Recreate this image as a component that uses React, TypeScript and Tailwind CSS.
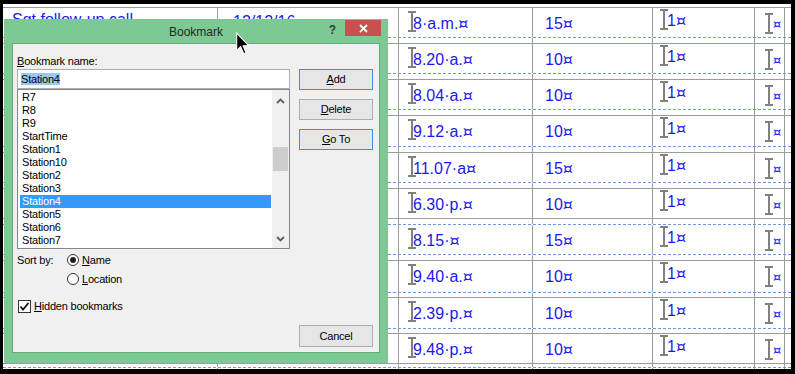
import React from "react";

const BLUE_TXT = "text-[#1a1aee]";

function Cur({ small }: { small?: boolean }) {
  return (
    <span className={small ? "font-['DejaVu_Sans',sans-serif] text-[13px]" : "font-['DejaVu_Sans',sans-serif] text-[16px]"}>¤</span>
  );
}

function IBeam() {
  return (
    <svg width="8" height="21" viewBox="0 0 8 21" className="shrink-0">
      <rect x="0" y="0" width="8" height="2" fill="#808080" />
      <rect x="3" y="0" width="2" height="21" fill="#808080" />
      <rect x="0" y="19" width="8" height="2" fill="#808080" />
    </svg>
  );
}

function withCur(s: string) {
  const base = s.endsWith("¤") ? s.slice(0, -1) : s;
  return (
    <>
      {base}
      <Cur />
    </>
  );
}

function TimeCell({ t }: { t: string }) {
  return (
    <div className="flex items-start pl-[9px] pt-[3px]">
      <IBeam />
      <span className={`ml-[-3px] mt-[4px] text-[16px] leading-[18px] whitespace-nowrap ${BLUE_TXT}`}>{withCur(t)}</span>
    </div>
  );
}

function DurCell({ d }: { d: string }) {
  return <div className={`pl-[12px] pt-[7px] text-[16px] leading-[18px] whitespace-nowrap ${BLUE_TXT}`}>{withCur(d)}</div>;
}

function OneCell() {
  return (
    <div className="flex items-start pl-[7px] pt-[1px]">
      <IBeam />
      <span className={`ml-[-1px] mt-[3px] text-[16px] leading-[18px] whitespace-nowrap ${BLUE_TXT}`}>{withCur("1¤")}</span>
    </div>
  );
}

function MarkCell() {
  return (
    <div className="flex items-start pl-[10px] pt-[5px]">
      <IBeam />
      <span className={`mt-[3px] leading-[14px] ${BLUE_TXT}`}>
        <Cur small />
      </span>
    </div>
  );
}

function Band({ h, cells }: { h: string; cells?: React.ReactNode[] }) {
  return (
    <div className={`grid grid-cols-[214px_181px_134px_120px_102px_30px_1fr] ${h}`}>
      {[0, 1, 2, 3, 4, 5, 6].map((i) => (
        <div key={i} className={i === 0 ? "min-w-0" : "min-w-0 border-l border-[#9c9c9c]"}>
          {cells ? cells[i] : null}
        </div>
      ))}
    </div>
  );
}

function Dash() {
  return <div className="h-px bg-[image:repeating-linear-gradient(90deg,#6a9be2_0_3px,transparent_3px_5px)]" />;
}

type Seg = { k: "a" | "b"; h: string } | { k: "d" };

type RowDef = { t?: string; d?: string; segs: Seg[]; first?: boolean };

const rows: RowDef[] = [
  { t: "8·a.m.¤", d: "15¤", first: true, segs: [{ k: "a", h: "h-[29px]" }, { k: "d" }, { k: "b", h: "h-[5px]" }] },
  { t: "8.20·a.¤", d: "10¤", segs: [{ k: "a", h: "h-[29px]" }, { k: "d" }, { k: "b", h: "h-[5px]" }] },
  { t: "8.04·a.¤", d: "10¤", segs: [{ k: "a", h: "h-[29px]" }, { k: "d" }, { k: "b", h: "h-[5px]" }] },
  { t: "9.12·a.¤", d: "10¤", segs: [{ k: "a", h: "h-[30px]" }, { k: "d" }, { k: "b", h: "h-[5px]" }] },
  { t: "11.07·a¤", d: "15¤", segs: [{ k: "a", h: "h-[29px]" }, { k: "d" }, { k: "b", h: "h-[5px]" }] },
  { t: "6.30·p.¤", d: "10¤", segs: [{ k: "a", h: "h-[29px]" }] },
  { t: "8.15·¤", d: "15¤", segs: [{ k: "b", h: "h-[5px]" }, { k: "d" }, { k: "a", h: "h-[29px]" }, { k: "d" }, { k: "b", h: "h-[5px]" }] },
  { t: "9.40·a.¤", d: "10¤", segs: [{ k: "a", h: "h-[31px]" }, { k: "d" }, { k: "b", h: "h-[4px]" }] },
  { t: "2.39·p.¤", d: "10¤", segs: [{ k: "a", h: "h-[30px]" }, { k: "d" }, { k: "b", h: "h-[4px]" }] },
  { t: "9.48·p.¤", d: "10¤", segs: [{ k: "a", h: "h-[29px]" }] },
  { segs: [{ k: "b", h: "h-[3px]" }, { k: "d" }, { k: "b", h: "h-[10px]" }] },
];

function Row({ r }: { r: RowDef }) {
  const cells: React.ReactNode[] = [
    r.first ? (
      <div className={`pt-[3px] pl-[9px] text-[16px] leading-[18px] whitespace-nowrap ${BLUE_TXT}`}>Sgt follow-up call</div>
    ) : null,
    r.first ? (
      <div className={`pt-[5px] pl-[15px] text-[16px] leading-[18px] whitespace-nowrap ${BLUE_TXT}`}>12/12/16</div>
    ) : null,
    r.t ? <TimeCell t={r.t} /> : null,
    r.d ? <DurCell d={r.d} /> : null,
    r.t ? <OneCell /> : null,
    r.t ? <MarkCell /> : null,
    null,
  ];
  return (
    <div className="flex flex-col border-t border-[#9c9c9c]">
      {r.segs.map((s, i) =>
        s.k === "d" ? <Dash key={i} /> : <Band key={i} h={s.h} cells={s.k === "a" ? cells : undefined} />
      )}
    </div>
  );
}

function U({ children }: { children: React.ReactNode }) {
  return <span className="underline underline-offset-[1px]">{children}</span>;
}

function Btn({ blue, children }: { blue?: boolean; children: React.ReactNode }) {
  return (
    <div
      className={`w-[74px] h-[21px] border ${blue ? "border-[#3b8fe6]" : "border-[#adadad]"} bg-[#e6e6e6] flex items-center justify-center`}
    >
      {children}
    </div>
  );
}

function Radio({ checked }: { checked?: boolean }) {
  return (
    <div className="w-[12px] h-[12px] rounded-full border border-[#333333] bg-white flex items-center justify-center shrink-0">
      {checked ? <div className="w-[6px] h-[6px] rounded-full bg-[#222222]" /> : null}
    </div>
  );
}

const items = ["R7", "R8", "R9", "StartTime", "Station1", "Station10", "Station2", "Station3", "Station4", "Station5", "Station6", "Station7"];

function Dialog() {
  return (
    <div className="absolute left-[1px] top-[15px] w-[384px] h-[344px] bg-[#7cc993] flex flex-col">
      <div className="h-[24px] flex">
        <div className="flex-1" />
        <div className="pt-[6px] text-[12px] leading-[14px] text-[#262626]">Bookmark</div>
        <div className="flex-1 flex justify-end">
          <span className="mt-[4px] mr-[9px] text-[12px] leading-[14px] font-bold text-[#3a3a3a]">?</span>
          <div className="mt-[1px] mr-[7px] w-[36px] h-[16px] bg-[#c75050] flex items-center justify-center">
            <svg width="9" height="9" viewBox="0 0 9 9">
              <path d="M1 1 L8 8 M8 1 L1 8" stroke="white" strokeWidth="1.8" />
            </svg>
          </div>
        </div>
      </div>
      <div className="ml-[8px] w-[368px] h-[310px] border border-[#62ad79] bg-[#f0f0f0] text-[11px] tracking-[-0.2px] text-black">
        <div className="flex flex-col pl-[4px] pt-[11px]">
          <div className="flex gap-[9px]">
            <div className="flex flex-col w-[273px]">
              <div className="h-[13px] leading-[13px]">
                <U>B</U>ookmark name:
              </div>
              <div className="mt-[1px] h-[20px] border border-[#abadb3] bg-white flex items-center pl-[3px]">
                <span className="bg-[#99c9ef] h-[12px] leading-[12px]">Station4</span>
              </div>
              <div className="h-[160px] border border-[#828790] bg-white flex">
                <div className="flex-1 flex flex-col pt-[1px] pl-[2px] pr-[1px]">
                  {items.map((it) => (
                    <div
                      key={it}
                      className={
                        it === "Station4"
                          ? "h-[13px] leading-[13px] pl-[2px] bg-[#3399ff] text-white"
                          : "h-[13px] leading-[13px] pl-[2px]"
                      }
                    >
                      {it}
                    </div>
                  ))}
                </div>
                <div className="w-[17px] bg-[#f0f0f0] flex flex-col items-center">
                  <svg className="mt-[8px]" width="9" height="6" viewBox="0 0 9 6">
                    <polyline points="1,5 4.5,1.5 8,5" fill="none" stroke="#606060" strokeWidth="1.8" />
                  </svg>
                  <div className="mt-[43px] w-[15px] h-[24px] bg-[#cdcdcd]" />
                  <svg className="mt-[65px]" width="9" height="6" viewBox="0 0 9 6">
                    <polyline points="1,1 4.5,4.5 8,1" fill="none" stroke="#606060" strokeWidth="1.8" />
                  </svg>
                </div>
              </div>
            </div>
            <div className="flex flex-col w-[74px] pt-[14px] gap-[9px]">
              <Btn blue>
                <span>
                  <U>A</U>dd
                </span>
              </Btn>
              <Btn>
                <span>
                  <U>D</U>elete
                </span>
              </Btn>
              <Btn blue>
                <span>
                  <U>G</U>o To
                </span>
              </Btn>
            </div>
          </div>
          <div className="mt-[3px] h-[16px] flex items-center">
            <span className="w-[50px]">Sort by:</span>
            <Radio checked />
            <span className="ml-[3px]">
              <U>N</U>ame
            </span>
          </div>
          <div className="mt-[3px] h-[16px] flex items-center pl-[50px]">
            <Radio />
            <span className="ml-[3px]">
              <U>L</U>ocation
            </span>
          </div>
          <div className="mt-[11px] h-[16px] flex items-center pl-[1px]">
            <div className="w-[13px] h-[13px] border border-[#333333] bg-white flex items-center justify-center shrink-0">
              <svg width="11" height="11" viewBox="0 0 11 11">
                <polyline points="1.5,5.5 4,8.5 9.5,2" fill="none" stroke="#111" strokeWidth="1.8" />
              </svg>
            </div>
            <span className="ml-[3px]">
              <U>H</U>idden bookmarks
            </span>
          </div>
          <div className="mt-[11px] flex justify-end pr-[6px]">
            <div className="w-[74px] h-[22px] border border-[#adadad] bg-[#e6e6e6] flex items-center justify-center">Cancel</div>
          </div>
        </div>
      </div>
    </div>
  );
}

export default function App() {
  return (
    <div className="w-[795px] h-[374px] bg-black pt-[4px] pl-[3px] font-['Liberation_Sans',Arial,sans-serif]">
      <div className="relative w-[788px] h-[365px] bg-white overflow-hidden">
        <div className="flex flex-col pt-[3px]">
          {rows.map((r, i) => (
            <Row key={i} r={r} />
          ))}
        </div>
        <Dialog />
        <svg className="absolute left-[233px] top-[28px]" width="14" height="23" viewBox="0 0 12 19">
          <path
            d="M0.6 0.6 L0.6 15.4 L4 12.2 L6.6 18.3 L8.6 17.4 L6.1 11.4 L10.8 11.4 Z"
            fill="black"
            stroke="white"
            strokeWidth="0.9"
          />
        </svg>
      </div>
    </div>
  );
}
